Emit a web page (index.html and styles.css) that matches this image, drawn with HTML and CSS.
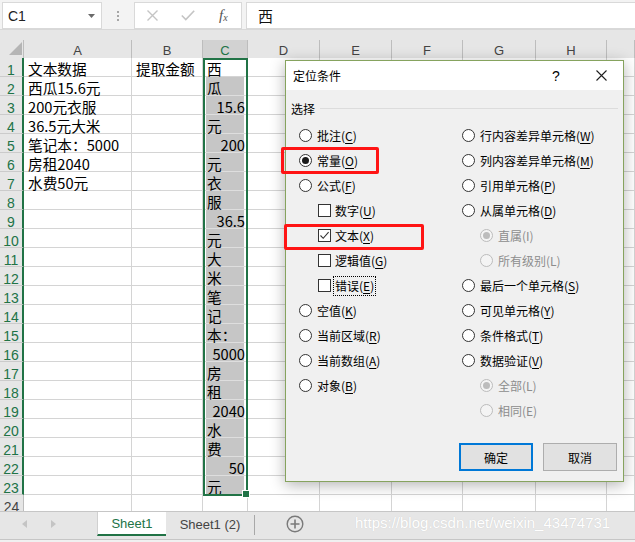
FILE: index.html
```html
<!DOCTYPE html>
<html lang="zh-CN">
<head>
<meta charset="utf-8">
<title>定位条件</title>
<link rel="stylesheet" href="styles.css">
</head>
<body>
<div class="app">
  <div class="fbar">
    <div class="namebox"><span>C1</span><svg width="7" height="4" viewBox="0 0 7 4"><path d="M0 0H7L3.5 4Z" fill="#6a6a6a"/></svg></div>
    <div class="grip"><svg width="2" height="10" viewBox="0 0 2 10"><rect x="0" y="0" width="2" height="2" fill="#a6a6a6"/><rect x="0" y="4" width="2" height="2" fill="#a6a6a6"/><rect x="0" y="8" width="2" height="2" fill="#a6a6a6"/></svg></div>
    <div class="fbtns">
      <svg width="11" height="11" viewBox="0 0 11 11"><path d="M0.5 0.5L10.5 10.5M10.5 0.5L0.5 10.5" stroke="#c4c4c4" stroke-width="1.4"/></svg>
      <svg width="14" height="11" viewBox="0 0 14 11"><path d="M0.8 5.5L4.8 9.6L13.2 0.8" stroke="#c4c4c4" stroke-width="1.6" fill="none"/></svg>
      <span class="fx">f<sub>x</sub></span>
    </div>
    <div class="finput">西</div>
  </div>

  <div class="colheads">
    <div class="corner"><svg width="23" height="17" viewBox="0 0 23 17"><path d="M22 2V15H9Z" fill="#b5b5b5"/></svg></div>
    <div class="ch">A</div><div class="ch">B</div><div class="ch sel">C</div><div class="ch">D</div><div class="ch">E</div><div class="ch">F</div><div class="ch">G</div><div class="ch">H</div><div class="ch"></div>
  </div>

  <div class="grid">
    <div class="rh">1</div><div class="c">文本数据</div><div class="c">提取金额</div><div class="c cc">西</div><div class="c"></div><div class="c"></div><div class="c"></div><div class="c"></div><div class="c"></div><div class="c"></div>
    <div class="rh">2</div><div class="c">西瓜15.6元</div><div class="c"></div><div class="c cc s">瓜</div><div class="c"></div><div class="c"></div><div class="c"></div><div class="c"></div><div class="c"></div><div class="c"></div>
    <div class="rh">3</div><div class="c">200元衣服</div><div class="c"></div><div class="c cc s r">15.6</div><div class="c"></div><div class="c"></div><div class="c"></div><div class="c"></div><div class="c"></div><div class="c"></div>
    <div class="rh">4</div><div class="c">36.5元大米</div><div class="c"></div><div class="c cc s">元</div><div class="c"></div><div class="c"></div><div class="c"></div><div class="c"></div><div class="c"></div><div class="c"></div>
    <div class="rh">5</div><div class="c">笔记本：5000</div><div class="c"></div><div class="c cc s r">200</div><div class="c"></div><div class="c"></div><div class="c"></div><div class="c"></div><div class="c"></div><div class="c"></div>
    <div class="rh">6</div><div class="c">房租2040</div><div class="c"></div><div class="c cc s">元</div><div class="c"></div><div class="c"></div><div class="c"></div><div class="c"></div><div class="c"></div><div class="c"></div>
    <div class="rh">7</div><div class="c">水费50元</div><div class="c"></div><div class="c cc s">衣</div><div class="c"></div><div class="c"></div><div class="c"></div><div class="c"></div><div class="c"></div><div class="c"></div>
    <div class="rh">8</div><div class="c"></div><div class="c"></div><div class="c cc s">服</div><div class="c"></div><div class="c"></div><div class="c"></div><div class="c"></div><div class="c"></div><div class="c"></div>
    <div class="rh">9</div><div class="c"></div><div class="c"></div><div class="c cc s r">36.5</div><div class="c"></div><div class="c"></div><div class="c"></div><div class="c"></div><div class="c"></div><div class="c"></div>
    <div class="rh">10</div><div class="c"></div><div class="c"></div><div class="c cc s">元</div><div class="c"></div><div class="c"></div><div class="c"></div><div class="c"></div><div class="c"></div><div class="c"></div>
    <div class="rh">11</div><div class="c"></div><div class="c"></div><div class="c cc s">大</div><div class="c"></div><div class="c"></div><div class="c"></div><div class="c"></div><div class="c"></div><div class="c"></div>
    <div class="rh">12</div><div class="c"></div><div class="c"></div><div class="c cc s">米</div><div class="c"></div><div class="c"></div><div class="c"></div><div class="c"></div><div class="c"></div><div class="c"></div>
    <div class="rh">13</div><div class="c"></div><div class="c"></div><div class="c cc s">笔</div><div class="c"></div><div class="c"></div><div class="c"></div><div class="c"></div><div class="c"></div><div class="c"></div>
    <div class="rh">14</div><div class="c"></div><div class="c"></div><div class="c cc s">记</div><div class="c"></div><div class="c"></div><div class="c"></div><div class="c"></div><div class="c"></div><div class="c"></div>
    <div class="rh">15</div><div class="c"></div><div class="c"></div><div class="c cc s">本：</div><div class="c"></div><div class="c"></div><div class="c"></div><div class="c"></div><div class="c"></div><div class="c"></div>
    <div class="rh">16</div><div class="c"></div><div class="c"></div><div class="c cc s r">5000</div><div class="c"></div><div class="c"></div><div class="c"></div><div class="c"></div><div class="c"></div><div class="c"></div>
    <div class="rh">17</div><div class="c"></div><div class="c"></div><div class="c cc s">房</div><div class="c"></div><div class="c"></div><div class="c"></div><div class="c"></div><div class="c"></div><div class="c"></div>
    <div class="rh">18</div><div class="c"></div><div class="c"></div><div class="c cc s">租</div><div class="c"></div><div class="c"></div><div class="c"></div><div class="c"></div><div class="c"></div><div class="c"></div>
    <div class="rh">19</div><div class="c"></div><div class="c"></div><div class="c cc s r">2040</div><div class="c"></div><div class="c"></div><div class="c"></div><div class="c"></div><div class="c"></div><div class="c"></div>
    <div class="rh">20</div><div class="c"></div><div class="c"></div><div class="c cc s">水</div><div class="c"></div><div class="c"></div><div class="c"></div><div class="c"></div><div class="c"></div><div class="c"></div>
    <div class="rh">21</div><div class="c"></div><div class="c"></div><div class="c cc s">费</div><div class="c"></div><div class="c"></div><div class="c"></div><div class="c"></div><div class="c"></div><div class="c"></div>
    <div class="rh">22</div><div class="c"></div><div class="c"></div><div class="c cc s r">50</div><div class="c"></div><div class="c"></div><div class="c"></div><div class="c"></div><div class="c"></div><div class="c"></div>
    <div class="rh">23</div><div class="c"></div><div class="c"></div><div class="c cc s">元</div><div class="c"></div><div class="c"></div><div class="c"></div><div class="c"></div><div class="c"></div><div class="c"></div>
    <div class="rh n">24</div><div class="c"></div><div class="c"></div><div class="c"></div><div class="c"></div><div class="c"></div><div class="c"></div><div class="c"></div><div class="c"></div><div class="c"></div>
  </div>

  <div class="tabs">
    <div class="nav">
      <svg width="5" height="8" viewBox="0 0 5 8"><path d="M5 0V8L0 4Z" fill="#c4c4c4"/></svg>
      <svg width="5" height="8" viewBox="0 0 5 8"><path d="M0 0V8L5 4Z" fill="#c4c4c4"/></svg>
    </div>
    <div class="tab">Sheet1</div>
    <div class="tab2">Sheet1 (2)</div>
    <div class="tsep"></div>
    <div class="add"><svg width="18" height="18" viewBox="0 0 18 18"><circle cx="9" cy="9" r="7.8" fill="none" stroke="#7a7a7a" stroke-width="1.4"/><path d="M9 4.5V13.5M4.5 9H13.5" stroke="#7a7a7a" stroke-width="1.6"/></svg></div>
  </div>
  <div class="foot"></div>
</div>

<div class="selbox"></div>

<div class="dialog">
  <div class="dlg-title">
    <span class="dlg-name">定位条件</span>
    <span class="dlg-help">?</span>
    <span class="dlg-close"><svg width="11" height="11" viewBox="0 0 11 11"><path d="M0.5 0.5L10.5 10.5M10.5 0.5L0.5 10.5" stroke="#1e1e1e" stroke-width="1.1"/></svg></span>
  </div>
  <div class="dlg-body">
    <div class="legend"><span>选择</span><i></i></div>
    <div class="opts">
      <div class="col">
        <div class="opt"><span class="radio"></span>批注(<u>C</u>)</div>
        <div class="opt"><span class="radio on"></span>常量(<u>O</u>)</div>
        <div class="opt"><span class="radio"></span>公式(<u>F</u>)</div>
        <div class="opt in"><span class="chk"></span>数字(<u>U</u>)</div>
        <div class="opt in"><span class="chk"><svg width="11" height="11" viewBox="0 0 11 11"><path d="M1.5 5.5L4.2 8.3L9.6 2.2" stroke="#333" stroke-width="1.1" fill="none"/></svg></span>文本(<u>X</u>)</div>
        <div class="opt in"><span class="chk"></span>逻辑值(<u>G</u>)</div>
        <div class="opt in"><span class="chk"></span><span class="focus">错误(<u>E</u>)</span></div>
        <div class="opt"><span class="radio"></span>空值(<u>K</u>)</div>
        <div class="opt"><span class="radio"></span>当前区域(<u>R</u>)</div>
        <div class="opt"><span class="radio"></span>当前数组(<u>A</u>)</div>
        <div class="opt"><span class="radio"></span>对象(<u>B</u>)</div>
      </div>
      <div class="col">
        <div class="opt"><span class="radio"></span>行内容差异单元格(<u>W</u>)</div>
        <div class="opt"><span class="radio"></span>列内容差异单元格(<u>M</u>)</div>
        <div class="opt"><span class="radio"></span>引用单元格(<u>P</u>)</div>
        <div class="opt"><span class="radio"></span>从属单元格(<u>D</u>)</div>
        <div class="opt in2 dis"><span class="radio on"></span>直属(I)</div>
        <div class="opt in2 dis"><span class="radio"></span>所有级别(L)</div>
        <div class="opt"><span class="radio"></span>最后一个单元格(<u>S</u>)</div>
        <div class="opt"><span class="radio"></span>可见单元格(<u>Y</u>)</div>
        <div class="opt"><span class="radio"></span>条件格式(<u>T</u>)</div>
        <div class="opt"><span class="radio"></span>数据验证(<u>V</u>)</div>
        <div class="opt in2 dis"><span class="radio on"></span>全部(L)</div>
        <div class="opt in2 dis"><span class="radio"></span>相同(E)</div>
      </div>
    </div>
    <div class="btns">
      <div class="btn pri">确定</div>
      <div class="btn">取消</div>
    </div>
  </div>
</div>

<div class="hl hl1"></div>
<div class="hl hl2"></div>

<div class="watermark">https://blog.csdn.net/weixin_43474731</div>
</body>
</html>
```

FILE: styles.css
```css
* { box-sizing: border-box; margin: 0; padding: 0; }
html, body { width: 635px; height: 542px; overflow: hidden; }
body {
  position: relative;
  background: #ffffff;
  font-family: "Noto Sans CJK SC", sans-serif;
  color: #000;
}
.app { display: flex; flex-direction: column; height: 542px; }

/* formula bar */
.fbar {
  flex: none;
  display: flex;
  height: 30px;
  padding: 2px 0 0 2px;
  background: #f3f3f3;
  border-bottom: 1px solid #d8d8d8;
}
.namebox {
  width: 100px;
  background: #fff;
  border: 1px solid #d9d9d9;
  display: flex;
  align-items: center;
  justify-content: space-between;
  padding: 0 6px 0 5px;
  font: 14px "Liberation Sans", sans-serif;
  color: #222;
}
.grip { width: 32px; display: flex; align-items: center; justify-content: center; }
.fbtns {
  width: 108px;
  background: #fff;
  border: 1px solid #d9d9d9;
  display: grid;
  grid-template-columns: repeat(3, 1fr);
  align-items: center;
  justify-items: center;
}
.fx { font: italic 15px "Liberation Serif", serif; color: #555; line-height: 1; }
.fx sub { font-size: 10px; vertical-align: -1px; }
.finput {
  flex: 1;
  margin-left: 4px;
  background: #fff;
  border: 1px solid #d9d9d9;
  border-right: 0;
  padding-left: 11px;
  display: flex;
  align-items: center;
  font-size: 15px;
  color: #111;
}

/* column headers */
.colheads, .grid {
  display: grid;
  grid-template-columns: 24px 108px 71px 45px 72px 72px 71px 73px 71px 28px;
}
.colheads {
  flex: none;
  height: 28px;
  padding-top: 10px;
  background: #e6e6e6;
}
.corner, .ch {
  border-right: 1px solid #bdbdbd;
  border-bottom: 1px solid #ababab;
}
.corner svg { display: block; }
.ch {
  text-align: center;
  font: 13px/21px "Liberation Sans", sans-serif;
  color: #444;
}
.ch.sel {
  background: #d2d2d2;
  color: #217346;
  border-bottom: 2px solid #217346;
}

/* cells */
.grid {
  flex: none;
  height: 453px;
  overflow: hidden;
  grid-auto-rows: 19px;
  align-content: start;
}
.rh {
  background: #e6e6e6;
  border-right: 2px solid #217346;
  border-bottom: 1px solid #cbcbcb;
  text-align: center;
  color: #217346;
  font: 14px/25px "Liberation Sans", sans-serif;
}
.rh.n { color: #444; border-right: 1px solid #bdbdbd; }
.c {
  background: #fff;
  border-right: 1px solid #d4d4d4;
  border-bottom: 1px solid #d4d4d4;
  padding: 0 3px 0 4px;
  font-size: 11pt;
  line-height: 21px;
  white-space: nowrap;
  color: #000;
}
.c.cc { padding-left: 4px; padding-right: 2px; }
.c.s {
  background: #c6c6c6;
  border-bottom-color: #dedede;
  box-shadow: inset 3px 0 #fff, inset -3px 0 #fff;
}
.c.r { text-align: right; }

.selbox {
  position: absolute;
  left: 203px;
  top: 58px;
  width: 45px;
  height: 438px;
  border: 2px solid #217346;
}
.selbox::after {
  content: "";
  position: absolute;
  right: -4px;
  bottom: -4px;
  width: 6px;
  height: 6px;
  background: #217346;
  border: 1px solid #fff;
}

/* sheet tabs */
.tabs {
  flex: none;
  height: 28px;
  border-top: 1px solid #c6c6c6;
  background: #e6e6e6;
  display: flex;
  align-items: flex-start;
  font: 13px "Liberation Sans", sans-serif;
  color: #444;
}
.nav {
  width: 97px;
  height: 24px;
  display: flex;
  align-items: center;
  padding-left: 22px;
  gap: 24px;
}
.tab {
  width: 69px;
  height: 24px;
  background: #fff;
  border-left: 1px solid #d0d0d0;
  border-bottom: 2px solid #217346;
  color: #217346;
  display: flex;
  align-items: center;
  justify-content: center;
}
.tab2 {
  width: 88px;
  height: 24px;
  display: flex;
  align-items: center;
  justify-content: center;
}
.tsep { width: 1px; height: 20px; margin-top: 3px; background: #a8a8a8; }
.add {
  width: 80px;
  height: 24px;
  display: flex;
  align-items: center;
  justify-content: center;
}
.foot { flex: none; height: 3px; border-top: 1px solid #c6c6c6; background: #f0f0f0; }

/* dialog */
.dialog {
  position: absolute;
  left: 285px;
  top: 60px;
  width: 339px;
  height: 422px;
  border: 1px solid #86a35e;
  background: #f0f0f0;
  box-shadow: 0 3px 14px rgba(0, 0, 0, 0.3);
  font-size: 12px;
  color: #000;
  display: flex;
  flex-direction: column;
}
.dlg-title {
  height: 29px;
  flex: none;
  background: #fff;
  display: flex;
  align-items: center;
  padding-left: 7px;
}
.dlg-name { flex: 1; }
.dlg-help { width: 20px; text-align: center; font: 14px "Liberation Sans", sans-serif; margin-right: 25px; }
.dlg-close { width: 20px; display: flex; justify-content: center; margin-right: 12px; }
.dlg-body { flex: 1; padding: 8px 5px 0; }
.legend { height: 20px; display: flex; align-items: center; gap: 5px; }
.legend i { flex: 1; height: 1px; background: #dcdcdc; }
.opts {
  display: grid;
  grid-template-columns: 163px 1fr;
  margin: 5px 0 0 8px;
}
.opt {
  height: 25px;
  display: flex;
  align-items: center;
  white-space: nowrap;
  line-height: 16px;
}
.opt u { text-decoration-thickness: 1px; text-underline-offset: 2px; }
.opt.in { padding-left: 19px; }
.opt.in2 { padding-left: 18px; }
.radio {
  flex: none;
  width: 13px;
  height: 13px;
  margin-right: 5px;
  border: 1px solid #333;
  border-radius: 50%;
  background: #fff;
  display: flex;
  align-items: center;
  justify-content: center;
}
.radio.on::after {
  content: "";
  width: 7px;
  height: 7px;
  border-radius: 50%;
  background: #1a1a1a;
}
.dis { color: #8d8d8d; }
.dis .radio { border-color: #bcbcbc; background: #f4f4f4; }
.dis .radio.on::after { background: #bcbcbc; }
.chk {
  flex: none;
  width: 13px;
  height: 13px;
  margin-right: 4px;
  border: 1px solid #333;
  background: #fff;
  display: flex;
  align-items: center;
  justify-content: center;
}
.chk svg { display: block; }
.focus {
  border: 1px dotted #000;
  padding: 0 1px;
  line-height: 18px;
  margin-left: -2px;
}
.btns {
  display: flex;
  justify-content: flex-end;
  gap: 10px;
  margin-top: 20px;
  padding-right: 1px;
}
.btn {
  width: 74px;
  height: 28px;
  background: #e1e1e1;
  border: 1px solid #adadad;
  display: flex;
  align-items: center;
  justify-content: center;
  font-size: 12px;
}
.btn.pri { border: 2px solid #0078d7; }

/* annotations */
.hl {
  position: absolute;
  border: 3px solid #ff1414;
  border-radius: 2px;
}
.hl1 { left: 281px; top: 147px; width: 98px; height: 27px; }
.hl2 { left: 284px; top: 224px; width: 140px; height: 26px; }

.watermark {
  position: absolute;
  left: 355px;
  top: 514px;
  font: 15px "Liberation Sans", sans-serif;
  color: #ffffff;
  text-shadow: 0 0 1px rgba(0, 0, 0, 0.14);
  white-space: nowrap;
}
```
